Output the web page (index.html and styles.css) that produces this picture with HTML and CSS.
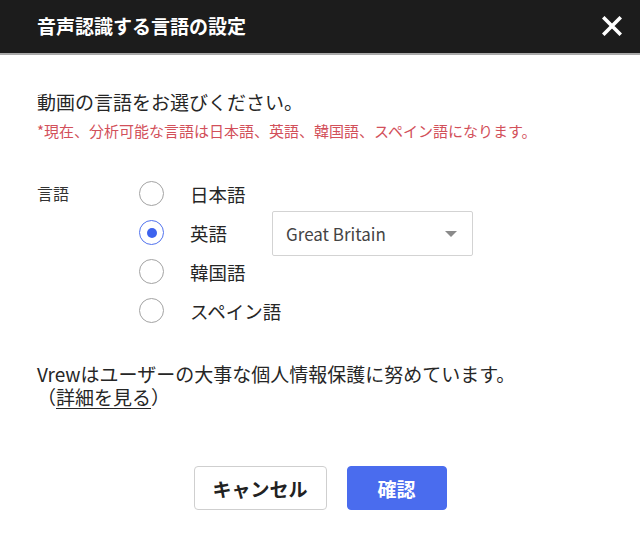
FILE: index.html
```html
<!DOCTYPE html>
<html lang="ja">
<head>
<meta charset="utf-8">
<link rel="stylesheet" href="styles.css">
</head>
<body>
<div class="dialog">
  <header class="header">
    <h1 class="title">音声認識する言語の設定</h1>
    <svg class="close" width="20" height="20" viewBox="0 0 20 20"><path d="M2.5 2.5 L17.5 17.5 M17.5 2.5 L2.5 17.5" stroke="#fff" stroke-width="3.6" stroke-linecap="square" fill="none"/></svg>
  </header>
  <main class="content">
    <p class="lead">動画の言語をお選びください。</p>
    <p class="note">*現在、分析可能な言語は日本語、英語、韓国語、スペイン語になります。</p>
    <div class="lang">
      <div class="lang-label">言語</div>
      <div class="options">
        <div class="option"><span class="radio"></span><span class="opt-text">日本語</span></div>
        <div class="option"><span class="radio checked"></span><span class="opt-text">英語</span>
          <div class="select"><span>Great Britain</span><span class="caret"></span></div>
        </div>
        <div class="option"><span class="radio"></span><span class="opt-text">韓国語</span></div>
        <div class="option"><span class="radio"></span><span class="opt-text">スペイン語</span></div>
      </div>
    </div>
    <div class="privacy">
      <div class="pline">Vrewはユーザーの大事な個人情報保護に努めています。</div>
      <div class="pline">（<span class="link">詳細を見る</span>）</div>
    </div>
    <div class="buttons">
      <button class="btn cancel">キャンセル</button>
      <button class="btn ok">確認</button>
    </div>
  </main>
</div>
</body>
</html>
```
FILE: styles.css
```css
* { box-sizing: border-box; }
html, body { margin: 0; padding: 0; background: #fff; }
body {
  font-family: "Noto Sans CJK JP", "Noto Sans", sans-serif;
  color: #262626;
  width: 640px;
  height: 548px;
  overflow: hidden;
}
.header {
  height: 55px;
  background: #1c1c1c;
  border-bottom: 2px solid #a9a9a9;
  display: flex;
  align-items: center;
  justify-content: space-between;
  padding: 0 18px 2px 37px;
}
.title {
  margin: 0;
  color: #fff;
  font-size: 19px;
  font-weight: 700;
  line-height: 24px;
}
.close { display: block; }
.content { padding: 0 37px; }
.lead {
  margin: 35px 0 0;
  font-size: 19px;
  line-height: 24px;
}
.note {
  margin: 7px 0 0;
  font-size: 15px;
  line-height: 20px;
  color: #d2505a;
}
.lang {
  display: flex;
  margin-top: 33px;
}
.lang-label {
  width: 103px;
  font-size: 16px;
  line-height: 39px;
  color: #333;
}
.options { display: flex; flex-direction: column; }
.option {
  display: flex;
  align-items: center;
  height: 39px;
}
.radio {
  width: 25px;
  height: 25px;
  border-radius: 50%;
  border: 1.5px solid #a3a3a3;
  display: flex;
  align-items: center;
  justify-content: center;
  flex: none;
  margin-left: -1px;
}
.radio.checked { border-color: #5273ee; }
.radio.checked::after {
  content: "";
  width: 10px;
  height: 10px;
  border-radius: 50%;
  background: #3d63ee;
}
.opt-text {
  margin-left: 26px;
  font-size: 18.5px;
  line-height: 24px;
}
.select {
  margin: -2px 0 -4px 45px;
  width: 201px;
  height: 45px;
  border: 1px solid #d3d3d3;
  border-radius: 2px;
  display: flex;
  align-items: center;
  justify-content: space-between;
  padding: 0 15px 0 13px;
  font-size: 17px;
  color: #444;
}
.caret {
  width: 0;
  height: 0;
  border-left: 6px solid transparent;
  border-right: 6px solid transparent;
  border-top: 6px solid #8a8a8a;
}
.privacy {
  margin-top: 32px;
  font-size: 19px;
}
.pline { height: 23px; line-height: 23px; }
.link { text-decoration: underline; text-underline-offset: 3px; }
.buttons {
  display: flex;
  justify-content: center;
  gap: 20px;
  margin-top: 58px;
}
.btn {
  height: 44px;
  border-radius: 4px;
  font-family: "Noto Sans CJK JP", sans-serif;
  font-size: 19px;
  font-weight: 700;
  cursor: pointer;
  padding: 0;
}
.cancel {
  width: 133px;
  background: #fff;
  border: 1px solid #cfcfcf;
  color: #222;
}
.ok {
  width: 100px;
  background: #4a6cee;
  border: 1px solid #4a6cee;
  color: #fff;
}
```
